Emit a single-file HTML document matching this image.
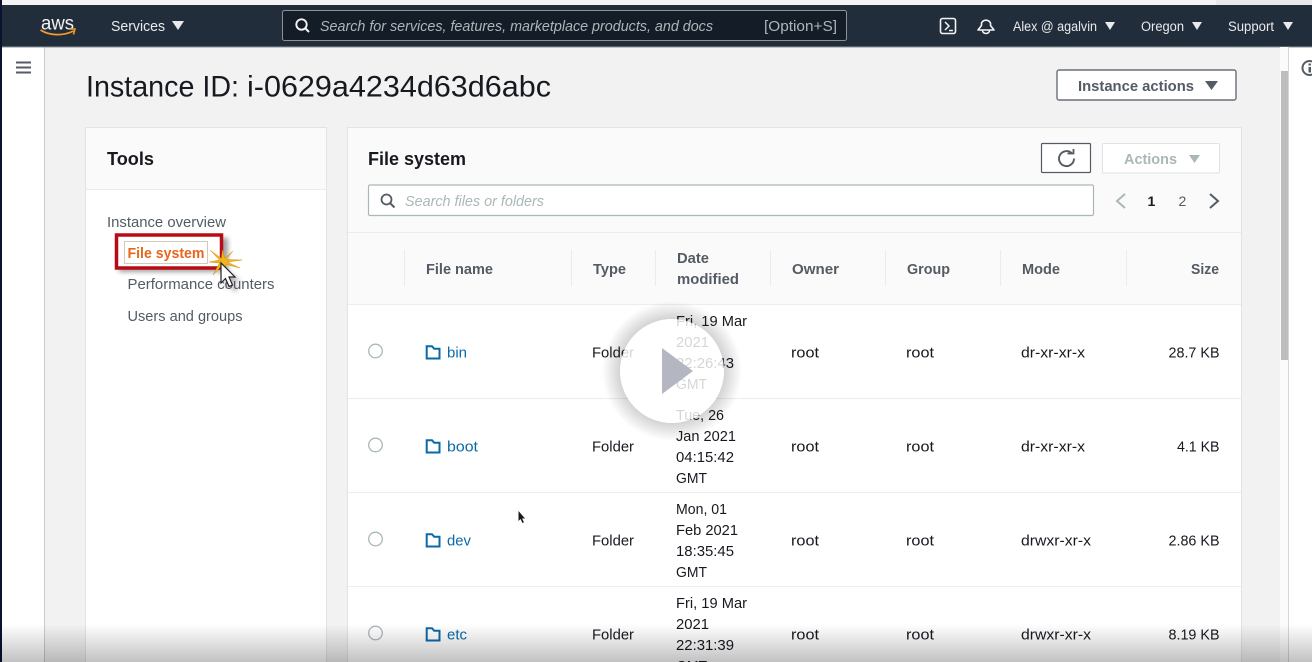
<!DOCTYPE html>
<html><head><meta charset="utf-8"><style>
html,body{margin:0;padding:0;background:#fff;width:1312px;height:662px;overflow:hidden}
svg{display:block;filter:blur(.3px)}
text{font-family:"Liberation Sans",sans-serif;font-size:14.5px;fill:#16191f}
.b{font-weight:700}
.h{font-weight:700;fill:#545b64;font-size:14.5px}
.s{fill:#545b64}
.l{fill:#0a6aa8;font-size:14.5px}
</style></head><body>
<svg width="1312" height="662" viewBox="0 0 1312 662" xmlns="http://www.w3.org/2000/svg">
<defs>
<linearGradient id="bot" x1="0" y1="0" x2="0" y2="1"><stop offset="0" stop-color="#000" stop-opacity="0"/><stop offset="1" stop-color="#000" stop-opacity=".24"/></linearGradient>
<radialGradient id="sh"><stop offset=".7" stop-color="#000" stop-opacity=".2"/><stop offset="1" stop-color="#000" stop-opacity="0"/></radialGradient>
<filter id="bl" x="-20%" y="-20%" width="140%" height="140%"><feGaussianBlur stdDeviation="2.5"/></filter>
<path id="fold" d="M1.200 1.200H6.500L8.700 3.800H14V13.500H1.200Z" fill="none" stroke="#0a6aa8" stroke-width="2"/>
</defs>
<rect width="1312" height="662" fill="#fff"/>
<!-- top strip -->
<rect width="1312" height="5" fill="#f4f4f4"/>
<rect x="1216" y="0" width="96" height="5" fill="#e8e8e8"/>
<!-- content bg -->
<rect x="45" y="47" width="1236" height="615" fill="#f2f2f2"/>
<rect x="44" y="47" width="1" height="615" fill="#c8cccc"/>
<rect x="0" y="0" width="2" height="662" fill="#0b1230"/>
<!-- header -->
<rect x="2" y="5" width="1310" height="42" fill="#222d3c"/>
<rect x="2" y="46.500" width="1310" height="1" fill="#8b929a"/>
<text x="41" y="29.500" textLength="33" lengthAdjust="spacingAndGlyphs" style="font-size:19px;fill:#f2f3f3">aws</text>
<path d="M40.500 30C50 36 63 36 73.500 31" fill="none" stroke="#f39c2c" stroke-width="1.700"/>
<path d="M69.500 29L75 29L73.500 34.500" fill="none" stroke="#f39c2c" stroke-width="1.500"/>
<text x="111" y="31" textLength="54" lengthAdjust="spacingAndGlyphs" style="fill:#e8eaec">Services</text>
<path d="M172 21H184L178 30Z" fill="#e8eaec"/>
<rect x="282.500" y="10.500" width="564" height="30" rx="2" fill="#141c28" stroke="#8b929a"/>
<circle cx="301.500" cy="24.500" r="5.200" fill="none" stroke="#f2f3f3" stroke-width="1.900"/>
<path d="M305 28L309 32" stroke="#f2f3f3" stroke-width="2"/>
<text x="320" y="31" textLength="393" lengthAdjust="spacingAndGlyphs" style="fill:#aab7b8;font-style:italic">Search for services, features, marketplace products, and docs</text>
<text x="764" y="31" textLength="73" lengthAdjust="spacingAndGlyphs" style="fill:#aab7b8">[Option+S]</text>
<rect x="940.500" y="18.500" width="15" height="15" rx="2" fill="none" stroke="#f2f3f3" stroke-width="1.600"/>
<path d="M945 22L949 26L945 30M949 30.500H953" fill="none" stroke="#f2f3f3" stroke-width="1.500"/>
<path d="M978 30H994L990.500 25.500V23A5 5 0 0 0 981.500 23V25.500Z" fill="none" stroke="#f2f3f3" stroke-width="1.600" stroke-linejoin="round"/>
<path d="M982.500 30.500A3.500 3 0 0 0 989.500 30.500" fill="none" stroke="#f2f3f3" stroke-width="1.500"/>
<text x="1013" y="31" textLength="84" lengthAdjust="spacingAndGlyphs" style="font-size:13.500px;fill:#e8eaec">Alex @ agalvin</text>
<path d="M1105 22H1115L1110 30Z" fill="#e8eaec"/>
<text x="1141" y="31" textLength="43" lengthAdjust="spacingAndGlyphs" style="font-size:13.500px;fill:#e8eaec">Oregon</text>
<path d="M1192 22H1202L1197 30Z" fill="#e8eaec"/>
<text x="1228" y="31" textLength="46" lengthAdjust="spacingAndGlyphs" style="font-size:13.500px;fill:#e8eaec">Support</text>
<path d="M1283 22H1293L1288 30Z" fill="#e8eaec"/>
<!-- hamburger -->
<path d="M16 62.500H31M16 67.500H31M16 72.500H31" stroke="#545b64" stroke-width="2"/>
<!-- right scrollbar + rail -->
<rect x="1280" y="47" width="8" height="615" fill="#fbfbfb"/>
<rect x="1281" y="71" width="7" height="289" fill="#bdbdbd"/>
<rect x="1288" y="47" width="1" height="615" fill="#d5d8d8"/>
<circle cx="1309.500" cy="68" r="7" fill="none" stroke="#545b64" stroke-width="2"/>
<rect x="1308.500" y="67" width="2.500" height="5.500" fill="#545b64"/><rect x="1308.500" y="63.500" width="2.500" height="2" fill="#545b64"/>
<!-- title -->
<text x="86" y="96.500" textLength="153" lengthAdjust="spacingAndGlyphs" style="font-size:30px;fill:#16191f">Instance ID:</text>
<text x="247" y="96.500" textLength="304" lengthAdjust="spacingAndGlyphs" style="font-size:30px;fill:#16191f">i-0629a4234d63d6abc</text>
<rect x="1057" y="70" width="179" height="30" rx="2" fill="#fff" stroke="#687078" stroke-width="1.400"/>
<text x="1078" y="91" class="b" textLength="116" lengthAdjust="spacingAndGlyphs" style="fill:#545b64">Instance actions</text>
<path d="M1205 81H1218L1211.500 90Z" fill="#545b64"/>
<!-- tools panel -->
<rect x="85" y="127" width="242" height="540" fill="#e2e4e4"/>
<rect x="86" y="128" width="240" height="534" fill="#fff"/>
<rect x="86" y="128" width="240" height="61" fill="#fafafa"/>
<rect x="86" y="189" width="240" height="1" fill="#eaeded"/>
<text x="107" y="165" class="b" textLength="47" lengthAdjust="spacingAndGlyphs" style="font-size:18px">Tools</text>
<text x="107" y="227" class="s" textLength="119" lengthAdjust="spacingAndGlyphs">Instance overview</text>
<rect x="119" y="238" width="109" height="34" fill="#555" opacity=".55" filter="url(#bl)"/>
<rect x="116.500" y="235" width="105" height="33" fill="#fff" stroke="#b80c14" stroke-width="3.500"/>
<rect x="124.500" y="241.500" width="83" height="22" fill="none" stroke="#a8946f" stroke-dasharray="1 1"/>
<text x="127.500" y="258" class="b" textLength="77" lengthAdjust="spacingAndGlyphs" style="fill:#e8661c">File system</text>
<text x="127.500" y="289" class="s" textLength="147" lengthAdjust="spacingAndGlyphs">Performance counters</text>
<text x="127.500" y="321" class="s" textLength="115" lengthAdjust="spacingAndGlyphs">Users and groups</text>
<!-- click star & cursor -->
<path d="M242 260L226 259.500L233 251L224.500 258.500L222.500 250L221.500 258.500L210 250L219.500 260L209 262L219.500 263L213 275L222 265L224 272L226 264.500L240 268L227 262Z" fill="#f0b51e" stroke="#d8920c" stroke-width=".5"/>
<path d="M223 266L223 287L228 282L231.500 290L236 288L232 280L239 279Z" fill="#555" opacity=".4" transform="translate(2 2)" filter="url(#bl)"/>
<path d="M221 263V283L225.500 278.500L229 286.500L232.500 285L229 277H235Z" fill="#fff" stroke="#222" stroke-width="1.200"/>
<!-- main panel -->
<rect x="347" y="127" width="895" height="540" fill="#e2e4e4"/>
<rect x="348" y="128" width="893" height="534" fill="#fff"/>
<rect x="348" y="128" width="893" height="104" fill="#fafafa"/>
<rect x="348" y="232" width="893" height="1" fill="#eaeded"/>
<rect x="348" y="233" width="893" height="71" fill="#fafafa"/>
<rect x="348" y="304" width="893" height="1" fill="#eaeded"/>
<text x="368" y="165" class="b" textLength="98" lengthAdjust="spacingAndGlyphs" style="font-size:18px">File system</text>
<rect x="1041.500" y="143.500" width="49" height="29" rx="1" fill="#fff" stroke="#545b64" stroke-width="1.200"/>
<path d="M1072 153.500A7.500 7.500 0 1 0 1074 158.500" fill="none" stroke="#545b64" stroke-width="1.900"/>
<path d="M1067.500 153.500H1073.500V149" fill="none" stroke="#545b64" stroke-width="1.800"/>
<rect x="1102.500" y="143.500" width="117" height="29.500" rx="1" fill="#fff" stroke="#dfe3e3"/>
<text x="1124" y="164" class="b" textLength="53" lengthAdjust="spacingAndGlyphs" style="fill:#aab7b8">Actions</text>
<path d="M1189 155H1200L1194.500 163Z" fill="#aab7b8"/>
<rect x="368.500" y="185" width="725" height="30.500" rx="1.500" fill="#fff" stroke="#aab7b8" stroke-width="1.200"/>
<circle cx="386.500" cy="199.500" r="5" fill="none" stroke="#545b64" stroke-width="1.800"/>
<path d="M390 203L394.500 207.500" stroke="#545b64" stroke-width="2"/>
<text x="405" y="206" textLength="139" lengthAdjust="spacingAndGlyphs" style="fill:#aab7b8;font-style:italic">Search files or folders</text>
<path d="M1125 194L1117 201L1125 208" fill="none" stroke="#aab7b8" stroke-width="2"/>
<text x="1147.500" y="206" class="b" style="font-size:14px">1</text>
<text x="1178.500" y="206" style="font-size:14px;fill:#545b64">2</text>
<path d="M1210 194L1218 201L1210 208" fill="none" stroke="#545b64" stroke-width="2"/>
<!-- table header -->
<g stroke="#eaeded"><path d="M404.500 250V286M571.500 250V286M655.500 250V286M770.500 250V286M885.500 250V286M1000.500 250V286M1126.500 250V286"/></g>
<text x="426" y="274" class="h" textLength="67" lengthAdjust="spacingAndGlyphs">File name</text>
<text x="593" y="274" class="h" textLength="33" lengthAdjust="spacingAndGlyphs">Type</text>
<text x="677" y="263" class="h" textLength="32" lengthAdjust="spacingAndGlyphs">Date</text>
<text x="677" y="284" class="h" textLength="62" lengthAdjust="spacingAndGlyphs">modified</text>
<text x="792" y="274" class="h" textLength="47" lengthAdjust="spacingAndGlyphs">Owner</text>
<text x="907" y="274" class="h" textLength="43" lengthAdjust="spacingAndGlyphs">Group</text>
<text x="1022" y="274" class="h" textLength="38" lengthAdjust="spacingAndGlyphs">Mode</text>
<text x="1191" y="274" class="h" textLength="28" lengthAdjust="spacingAndGlyphs">Size</text>
<!-- row lines -->
<g fill="#eaeded"><rect x="348" y="398" width="893" height="1"/><rect x="348" y="492" width="893" height="1"/><rect x="348" y="586" width="893" height="1"/></g>
<!-- play shadow and white disc under text -->
<circle cx="672" cy="371" r="70" fill="url(#sh)"/>
<circle cx="672" cy="371" r="52" fill="#fff"/>
<!-- row 1 -->
<circle cx="375.500" cy="351" r="6.800" fill="#fff" stroke="#aab7b8" stroke-width="1.300"/>
<use href="#fold" x="425.500" y="345"/>
<text x="447" y="357.500" class="l" textLength="20" lengthAdjust="spacingAndGlyphs">bin</text>
<text x="592" y="357.500" textLength="42" lengthAdjust="spacingAndGlyphs">Folder</text>
<text x="676" y="326" textLength="71" lengthAdjust="spacingAndGlyphs">Fri, 19 Mar</text>
<text x="676" y="347" textLength="33" lengthAdjust="spacingAndGlyphs">2021</text>
<text x="676" y="368" textLength="58" lengthAdjust="spacingAndGlyphs">22:26:43</text>
<text x="676" y="389" textLength="31" lengthAdjust="spacingAndGlyphs">GMT</text>
<text x="791" y="357.500" textLength="28" lengthAdjust="spacingAndGlyphs">root</text>
<text x="906" y="357.500" textLength="28" lengthAdjust="spacingAndGlyphs">root</text>
<text x="1021" y="357.500" textLength="64" lengthAdjust="spacingAndGlyphs">dr-xr-xr-x</text>
<text x="1168.500" y="357.500" textLength="51" lengthAdjust="spacingAndGlyphs">28.7 KB</text>
<!-- row 2 -->
<circle cx="375.500" cy="445" r="6.800" fill="#fff" stroke="#aab7b8" stroke-width="1.300"/>
<use href="#fold" x="425.500" y="439"/>
<text x="447" y="451.500" class="l" textLength="31" lengthAdjust="spacingAndGlyphs">boot</text>
<text x="592" y="451.500" textLength="42" lengthAdjust="spacingAndGlyphs">Folder</text>
<text x="676" y="420" textLength="48" lengthAdjust="spacingAndGlyphs">Tue, 26</text>
<text x="676" y="441" textLength="60" lengthAdjust="spacingAndGlyphs">Jan 2021</text>
<text x="676" y="462" textLength="58" lengthAdjust="spacingAndGlyphs">04:15:42</text>
<text x="676" y="483" textLength="31" lengthAdjust="spacingAndGlyphs">GMT</text>
<text x="791" y="451.500" textLength="28" lengthAdjust="spacingAndGlyphs">root</text>
<text x="906" y="451.500" textLength="28" lengthAdjust="spacingAndGlyphs">root</text>
<text x="1021" y="451.500" textLength="64" lengthAdjust="spacingAndGlyphs">dr-xr-xr-x</text>
<text x="1177" y="451.500" textLength="42.500" lengthAdjust="spacingAndGlyphs">4.1 KB</text>
<!-- row 3 -->
<circle cx="375.500" cy="539" r="6.800" fill="#fff" stroke="#aab7b8" stroke-width="1.300"/>
<use href="#fold" x="425.500" y="533"/>
<text x="447" y="545.500" class="l" textLength="24" lengthAdjust="spacingAndGlyphs">dev</text>
<text x="592" y="545.500" textLength="42" lengthAdjust="spacingAndGlyphs">Folder</text>
<text x="676" y="514" textLength="51" lengthAdjust="spacingAndGlyphs">Mon, 01</text>
<text x="676" y="535" textLength="62" lengthAdjust="spacingAndGlyphs">Feb 2021</text>
<text x="676" y="556" textLength="58" lengthAdjust="spacingAndGlyphs">18:35:45</text>
<text x="676" y="577" textLength="31" lengthAdjust="spacingAndGlyphs">GMT</text>
<text x="791" y="545.500" textLength="28" lengthAdjust="spacingAndGlyphs">root</text>
<text x="906" y="545.500" textLength="28" lengthAdjust="spacingAndGlyphs">root</text>
<text x="1021" y="545.500" textLength="70" lengthAdjust="spacingAndGlyphs">drwxr-xr-x</text>
<text x="1168.500" y="545.500" textLength="51" lengthAdjust="spacingAndGlyphs">2.86 KB</text>
<!-- small pointer -->
<path d="M518.500 511V521L520.500 519L522.500 523L524 522.300L522 518.500H525Z" fill="#16191f"/>
<!-- row 4 -->
<circle cx="375.500" cy="633" r="6.800" fill="#fff" stroke="#aab7b8" stroke-width="1.300"/>
<use href="#fold" x="425.500" y="627"/>
<text x="447" y="639.500" class="l" textLength="20" lengthAdjust="spacingAndGlyphs">etc</text>
<text x="592" y="639.500" textLength="42" lengthAdjust="spacingAndGlyphs">Folder</text>
<text x="676" y="608" textLength="71" lengthAdjust="spacingAndGlyphs">Fri, 19 Mar</text>
<text x="676" y="629" textLength="33" lengthAdjust="spacingAndGlyphs">2021</text>
<text x="676" y="650" textLength="58" lengthAdjust="spacingAndGlyphs">22:31:39</text>
<text x="676" y="671" textLength="31" lengthAdjust="spacingAndGlyphs">GMT</text>
<text x="791" y="639.500" textLength="28" lengthAdjust="spacingAndGlyphs">root</text>
<text x="906" y="639.500" textLength="28" lengthAdjust="spacingAndGlyphs">root</text>
<text x="1021" y="639.500" textLength="70" lengthAdjust="spacingAndGlyphs">drwxr-xr-x</text>
<text x="1168.500" y="639.500" textLength="51" lengthAdjust="spacingAndGlyphs">8.19 KB</text>
<!-- play button -->
<circle cx="672" cy="371" r="52" fill="#fff" fill-opacity=".82"/>
<path d="M662 348V394L693 371Z" fill="#b4b6c1"/>
<!-- bottom shade -->
<rect y="624" width="1312" height="38" fill="url(#bot)"/>
</svg>
</body></html>
